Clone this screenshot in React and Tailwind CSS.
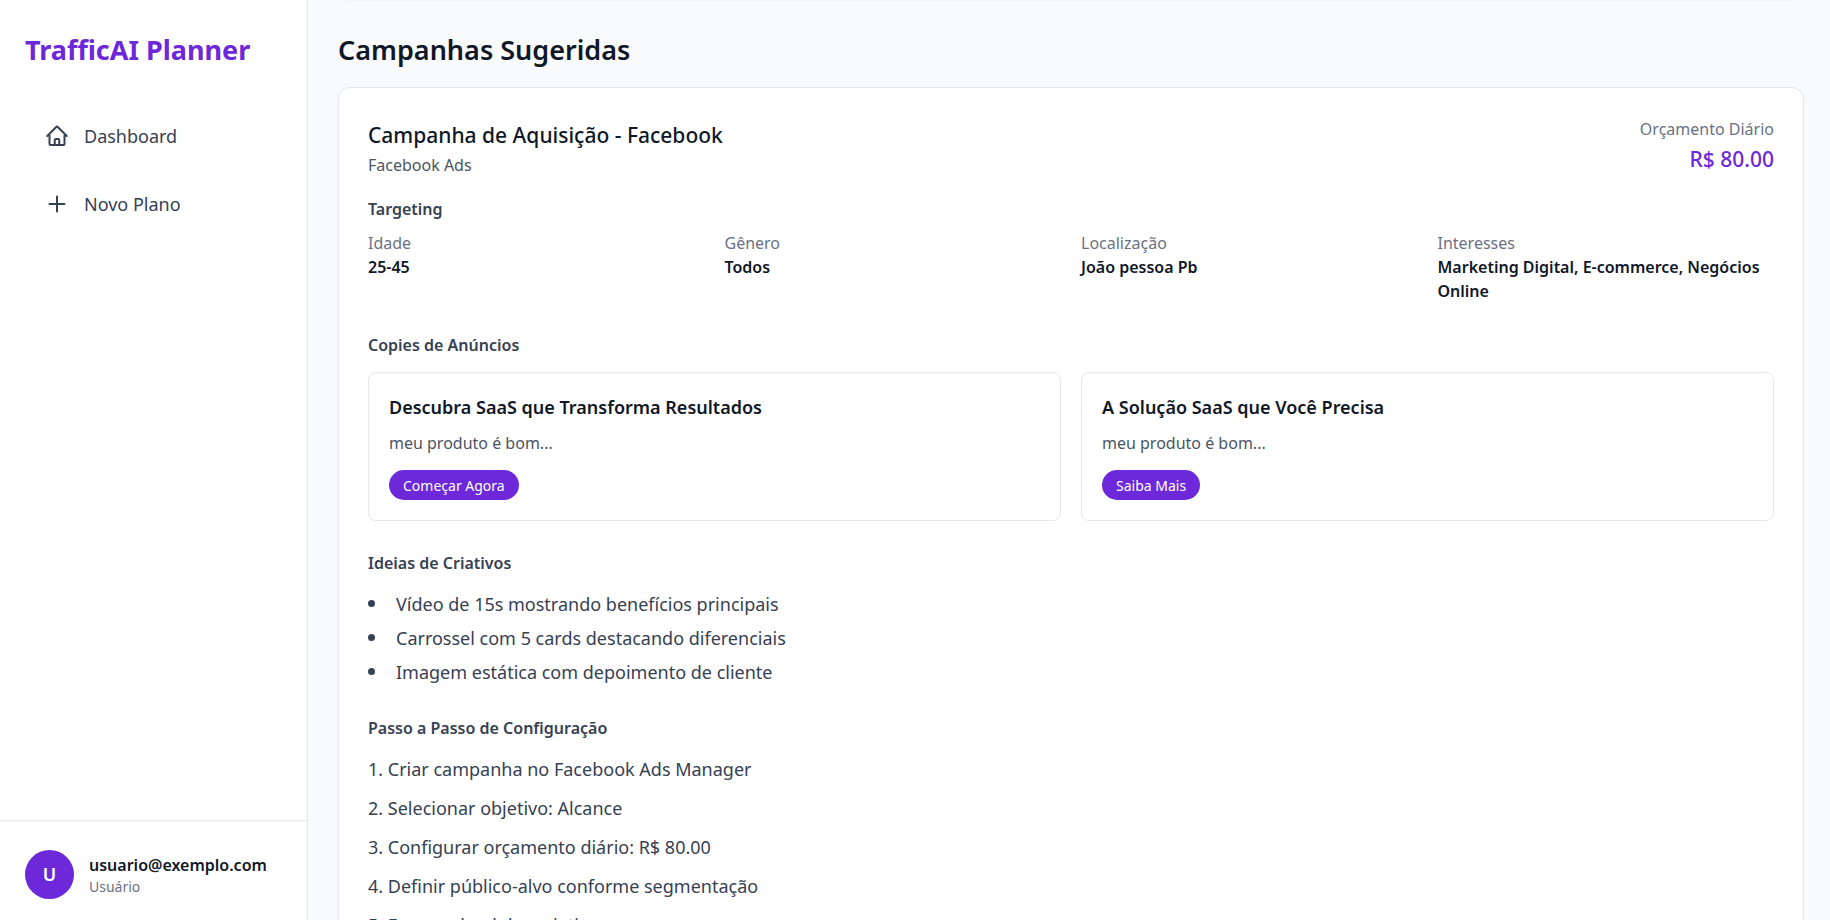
import React from "react";
import { HiOutlineHome, HiOutlinePlus } from "react-icons/hi2";

const NAV_ITEMS = [
  { label: "Dashboard", href: "#dashboard", Icon: HiOutlineHome },
  { label: "Novo Plano", href: "#novo-plano", Icon: HiOutlinePlus },
];

const campaign = {
  name: "Campanha de Aquisição - Facebook",
  platform: "Facebook Ads",
  budget: 80,
  targeting: [
    { label: "Idade", value: "25-45" },
    { label: "Gênero", value: "Todos" },
    { label: "Localização", value: "João pessoa Pb" },
    { label: "Interesses", value: "Marketing Digital, E-commerce, Negócios Online" },
  ],
  copies: [
    { title: "Descubra SaaS que Transforma Resultados", text: "meu produto é bom...", cta: "Começar Agora" },
    { title: "A Solução SaaS que Você Precisa", text: "meu produto é bom...", cta: "Saiba Mais" },
  ],
  creatives: [
    "Vídeo de 15s mostrando benefícios principais",
    "Carrossel com 5 cards destacando diferenciais",
    "Imagem estática com depoimento de cliente",
  ],
  steps: [
    "Criar campanha no Facebook Ads Manager",
    "Selecionar objetivo: Alcance",
    "Configurar orçamento diário: R$ 80.00",
    "Definir público-alvo conforme segmentação",
    "Fazer upload dos criativos",
  ],
};

const Sidebar = () => (
  <aside className="flex w-[308px] shrink-0 flex-col border-r border-gray-200 bg-white">
    <div className="px-[25px] pt-8">
      <h1 className="text-[27px] leading-9 font-bold text-[#6d28d9]">TrafficAI Planner</h1>
    </div>
    <nav className="mt-[34px] flex flex-1 flex-col px-[25px]">
      {NAV_ITEMS.map(({ label, href, Icon }) => (
        <a key={label} href={href} className="flex h-[68px] items-center gap-[15px] px-5 text-[18px] text-gray-700">
          <Icon className="size-6" strokeWidth={2} />
          {label}
        </a>
      ))}
    </nav>
    <div className="flex items-center gap-[15px] border-t border-gray-200 px-[25px] pt-[29px] pb-[21px]">
      <div className="flex size-[49px] items-center justify-center rounded-full bg-[#6d28d9] text-[18px] font-semibold text-white">U</div>
      <div>
        <p className="text-[16px] leading-6 font-semibold text-gray-900">usuario@exemplo.com</p>
        <p className="text-[14px] leading-5 text-gray-500">Usuário</p>
      </div>
    </div>
  </aside>
);

const Section = ({ title, children }) => (
  <section className="mt-[30px]">
    <h4 className="mb-[15px] text-[16px] leading-6 font-semibold text-gray-700">{title}</h4>
    {children}
  </section>
);

const CampaignCard = ({ data }) => (
  <article className="rounded-xl border border-gray-200 bg-white p-[29px] shadow-xs">
    <header className="flex items-start justify-between">
      <div>
        <h3 className="text-[21px] leading-9 font-medium text-gray-900">{data.name}</h3>
        <p className="text-[16px] leading-6 text-gray-600">{data.platform}</p>
      </div>
      <div className="text-right">
        <p className="text-[16px] leading-6 text-gray-500">Orçamento Diário</p>
        <p className="text-[21px] leading-9 font-medium text-[#6d28d9]">R$ {data.budget.toFixed(2)}</p>
      </div>
    </header>
    <section className="mt-5">
      <h4 className="mb-2.5 text-[16px] leading-6 font-semibold text-gray-700">Targeting</h4>
      <dl className="grid grid-cols-4 gap-5">
        {data.targeting.map((t) => (
          <div key={t.label} className="text-[16px] leading-6">
            <dt className="text-gray-500">{t.label}</dt>
            <dd className="font-semibold text-gray-900">{t.value}</dd>
          </div>
        ))}
      </dl>
    </section>
    <Section title="Copies de Anúncios">
      <div className="grid grid-cols-2 gap-5">
        {data.copies.map((c) => (
          <div key={c.title} className="rounded-lg border border-gray-200 p-5">
            <h5 className="text-[18px] leading-7 font-semibold text-gray-900">{c.title}</h5>
            <p className="mt-2.5 mb-[15px] text-[16px] leading-6 text-gray-600">{c.text}</p>
            <button type="button" className="h-[30px] rounded-full bg-[#6d28d9] px-3.5 text-[14px] text-white">{c.cta}</button>
          </div>
        ))}
      </div>
    </Section>
    <Section title="Ideias de Criativos">
      <ul className="list-inside list-disc space-y-1.5 text-[18px] leading-7 text-gray-700 marker:text-[20px]">
        {data.creatives.map((item) => <li key={item}>{item}</li>)}
      </ul>
    </Section>
    <Section title="Passo a Passo de Configuração">
      <ol className="list-inside list-decimal space-y-[11px] text-[18px] leading-7 text-gray-700">
        {data.steps.map((item) => <li key={item}>{item}</li>)}
      </ol>
    </Section>
  </article>
);

export default function App() {
  return (
    <div className="flex h-screen overflow-hidden bg-gray-50 font-['Noto_Sans',sans-serif]">
      <Sidebar />
      <main className="flex-1 overflow-y-auto pr-[26px] pl-[30px]">
        <div className="mx-2 h-px bg-gray-100" />
        <h2 className="mt-[31px] mb-[19px] text-[27px] leading-9 font-semibold text-gray-900">Campanhas Sugeridas</h2>
        <CampaignCard data={campaign} />
      </main>
    </div>
  );
}
